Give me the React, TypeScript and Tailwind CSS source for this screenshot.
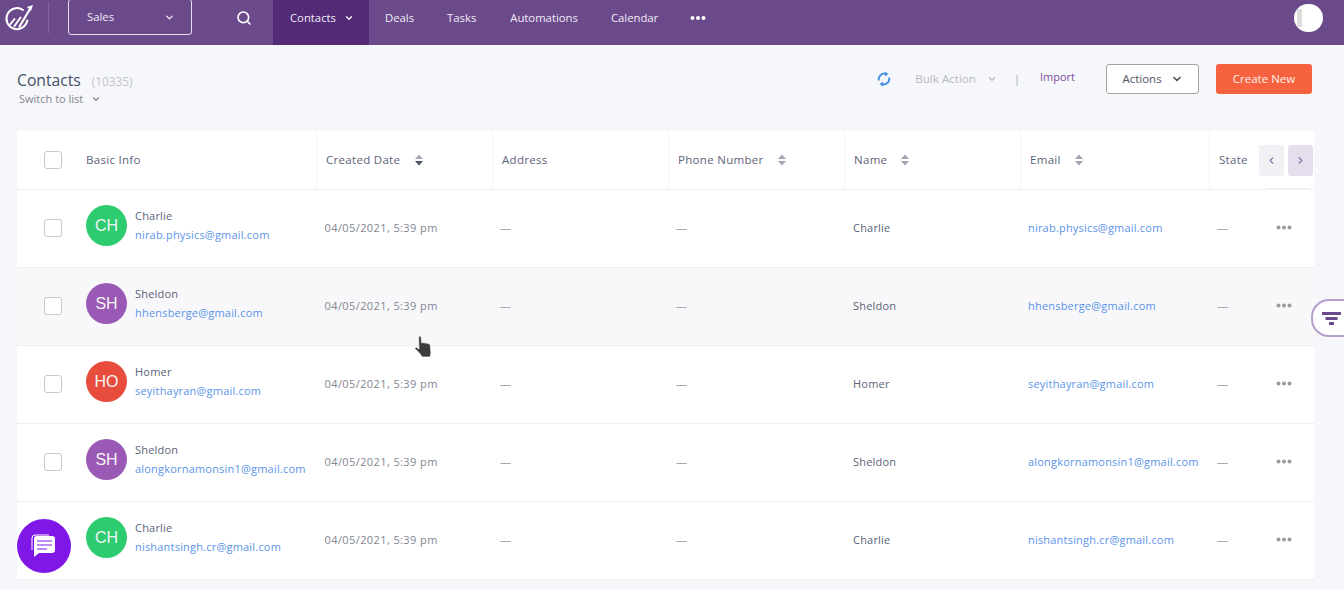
import { ChevronDown, ChevronLeft, ChevronRight, Search } from 'lucide-react'

const contacts = [
  { initials: 'CH', color: 'bg-[#2ecc71]', name: 'Charlie', email: 'nirab.physics@gmail.com', alt: false },
  { initials: 'SH', color: 'bg-[#9b59b6]', name: 'Sheldon', email: 'hhensberge@gmail.com', alt: true },
  { initials: 'HO', color: 'bg-[#e74c3c]', name: 'Homer', email: 'seyithayran@gmail.com', alt: false },
  { initials: 'SH', color: 'bg-[#9b59b6]', name: 'Sheldon', email: 'alongkornamonsin1@gmail.com', alt: false },
  { initials: 'CH', color: 'bg-[#2ecc71]', name: 'Charlie', email: 'nishantsingh.cr@gmail.com', alt: false },
]

const cols = 'grid grid-cols-[68px_231px_176px_176px_176px_176px_189px_105px]'

function Sort({ active }: { active?: boolean }) {
  return (
    <svg width="8" height="12" viewBox="0 0 8 12" className={'shrink-0 ' + (active ? 'ml-[15px]' : 'ml-3.5')}>
      <path d="M4 0.5 8 5H0z" fill="#a3a7b3" />
      <path d="M4 11.5 8 7H0z" fill={active ? '#4b5168' : '#a3a7b3'} />
    </svg>
  )
}

function Box() {
  return <div className="w-[18px] h-[18px] rounded-[3px] border border-[#c9c9c9] bg-white" />
}

function Head({ label, sort, active }: { label: string; sort?: boolean; active?: boolean }) {
  return (
    <div className="flex items-center pl-[9px] border-l border-[#f3f3f6] text-[11.5px] tracking-[0.3px] text-[#5d6378]">
      {label}
      {sort && <Sort active={active} />}
    </div>
  )
}

export default function App() {
  return (
    <div className="relative h-[589px] w-[1344px] overflow-hidden bg-[#f6f7fa] font-['Open_Sans','Noto_Sans',sans-serif]">
      <header className="flex h-[45px] items-stretch bg-[#6b4a8b] text-[11.3px] text-[#f1ecf6]">
        <div className="w-[48px]">
          <svg width="36" height="36" viewBox="0 0 36 36" fill="none" stroke="#fff" strokeLinecap="round">
            <path d="M23 10A10.5 10.5 0 1 0 27.3 20.5" strokeWidth="2" />
            <path d="M10.5 24l4-5M14.5 26l6-8.5" strokeWidth="2" />
            <path d="M19.5 26.5 30 9" strokeWidth="2.2" />
            <path d="M33 5l-6 2 4 4z" fill="#fff" stroke="none" />
          </svg>
        </div>
        <div className="my-[2px] h-[31px] w-px bg-[#83679f]" />
        <div className="ml-[19px] -mt-px flex h-[36px] w-[124px] items-center justify-between rounded-[3px] border border-[#e6deee] pl-[18px] pr-4">
          <span>Sales</span>
          <ChevronDown size={11} strokeWidth={3} />
        </div>
        <div className="ml-[44px] mr-[21px] flex items-start pt-[10px]">
          <Search size={16} strokeWidth={2.4} color="#fff" />
        </div>
        <div className="flex w-[96px] items-center gap-2 bg-[#522a76] pb-[9px] pl-[17px] text-[11.3px]">
          Contacts <ChevronDown size={10} strokeWidth={3.5} />
        </div>
        <div className="ml-4 flex items-center gap-[33px] pb-[9px]">
          <span>Deals</span>
          <span>Tasks</span>
          <span className="ml-px">Automations</span>
          <span>Calendar</span>
          <svg width="16" height="4" viewBox="0 0 16 4" fill="#fff" className="-ml-px">
            <circle cx="2.5" cy="2" r="2" />
            <circle cx="8" cy="2" r="2" />
            <circle cx="13.5" cy="2" r="2" />
          </svg>
        </div>
        <div className="ml-auto mr-[21px] mt-1 flex h-[28px] w-[29px] items-center overflow-hidden rounded-full bg-white pl-[3px]">
          <div className="h-[18px] w-[5px] bg-[#dcdcdc]" />
        </div>
      </header>

      <div className="flex h-[86px] justify-between pl-[17px] pr-[32px]">
        <div>
          <div className="mt-6 flex items-baseline">
            <span className="text-[15.7px] leading-[22px] text-[#475067]">Contacts</span>
            <span className="ml-[11px] text-[11.8px] text-[#c2c4cc]">(10335)</span>
          </div>
          <div className="ml-[2px] flex items-center gap-2 text-[11px] leading-[16px] text-[#83868f]">
            Switch to list <ChevronDown size={10} strokeWidth={3} />
          </div>
        </div>
        <div className="mt-[19px] flex h-[30px] items-center">
          <svg width="14" height="16" viewBox="0 0 14 16" fill="none" stroke="#4a90e2" strokeWidth="2" className="mr-[24px]">
            <path d="M2 9.5A5.5 5.5 0 0 1 9.5 3" />
            <path d="M12 6.5A5.5 5.5 0 0 1 4.5 13" />
            <path d="M8 0.5 11.5 3 8 5.5z" fill="#4a90e2" stroke="none" />
            <path d="M6 10.5 2.5 13 6 15.5z" fill="#4a90e2" stroke="none" />
          </svg>
          <span className="text-[11.6px] text-[#b6b8c3]">Bulk Action</span>
          <ChevronDown size={10} strokeWidth={3} color="#b6b8c3" className="ml-[11px]" />
          <span className="ml-[17px] text-[11px] text-[#a2a2a8]">|</span>
          <span className="ml-[20px] -mt-[3px] text-[11px] text-[#7b4f9d]">Import</span>
          <div className="ml-[31px] flex h-[30px] w-[93px] items-center justify-center gap-[9px] rounded-[3px] border border-[#a8a2a0] bg-white text-[11.5px] text-[#50535e]">
            Actions <ChevronDown size={12} strokeWidth={3.5} />
          </div>
          <div className="ml-[17px] flex h-[30px] w-[96px] items-center justify-center rounded-[3px] bg-[#f6623f] text-[11.5px] text-[#fdeee9]">
            Create New
          </div>
        </div>
      </div>

      <div className="ml-[17px] w-[1297px] bg-white">
        <div className={cols + ' relative h-[59px] border-b border-[#eceef0]'}>
          <div className="flex items-center pl-[27px]"><Box /></div>
          <div className="flex items-center pl-px text-[11.5px] tracking-[0.3px] text-[#5d6378]">Basic Info</div>
          <Head label="Created Date" sort active />
          <Head label="Address" />
          <Head label="Phone Number" sort />
          <Head label="Name" sort />
          <Head label="Email" sort />
          <Head label="State" />
          <div className="absolute right-px top-[14px] flex gap-1 text-[#8c6fa8]">
            <div className="flex h-[31px] w-[25px] items-center justify-center rounded-[3px] bg-[#f1f0f5]">
              <ChevronLeft size={11} strokeWidth={2.5} />
            </div>
            <div className="flex h-[31px] w-[25px] items-center justify-center rounded-[3px] bg-[#e5dfed]">
              <ChevronRight size={11} strokeWidth={2.5} />
            </div>
          </div>
          <div className="absolute -bottom-px right-[5px] h-[2px] w-[42px] bg-[#f1f1f4]" />
        </div>

        {contacts.map((c) => (
          <div key={c.email} className={cols + ' h-[78px] border-b border-[#eceef0] text-[11px] tracking-[0.2px] ' + (c.alt ? 'bg-[#f8f8fb]' : 'bg-white')}>
            <div className="flex items-center pl-[27px] pb-[2px]"><Box /></div>
            <div className="flex items-center">
              <div className={"ml-px -mt-[6px] flex h-[41px] w-[41px] shrink-0 items-center justify-center rounded-full font-['Liberation_Sans',sans-serif] text-[16px] tracking-normal text-[#f4f4f4] " + c.color}>
                {c.initials}
              </div>
              <div className="ml-2 -mt-2 leading-[19px]">
                <div className="text-[#5d6378]">{c.name}</div>
                <div className="text-[#5b94ea]">{c.email}</div>
              </div>
            </div>
            <div className="flex items-center pl-[8.5px] tracking-[0.4px] text-[#83868f]">04/05/2021, 5:39 pm</div>
            <div className="flex items-center pl-2 text-[#a8a8a8]">—</div>
            <div className="flex items-center pl-2 text-[#a8a8a8]">—</div>
            <div className="flex items-center pl-[9px] text-[#5d6378]">{c.name}</div>
            <div className="flex items-center pl-2 text-[#5b94ea]">{c.email}</div>
            <div className="flex items-center pl-2 text-[#a8a8a8]">
              —
              <svg width="16" height="5" viewBox="0 0 16 5" fill="#9a9a9e" className="ml-[48px] mb-[2px]">
                <circle cx="2.5" cy="2.5" r="2" />
                <circle cx="8" cy="2.5" r="2" />
                <circle cx="13.5" cy="2.5" r="2" />
              </svg>
            </div>
          </div>
        ))}
      </div>

      {/* floating bits */}
      <div className="absolute left-[1311px] top-[299px] flex h-[38px] w-[50px] items-center rounded-l-[18px] border-2 border-[#b59fcb] bg-white pl-[9px]">
        <svg width="19" height="13" viewBox="0 0 19 13" fill="#6b4a8b">
          <rect x="0" y="0" width="19" height="3" />
          <rect x="3.5" y="5" width="12" height="3" />
          <rect x="7" y="10" width="5" height="3" />
        </svg>
      </div>

      <div className="absolute left-[17px] top-[519px] flex h-[54px] w-[54px] items-center justify-center rounded-full bg-[#7f18e6]">
        <svg width="26" height="26" viewBox="0 0 26 26" fill="none">
          <path d="M1 17V5a3 3 0 0 1 3-3h14" stroke="#fff" strokeWidth="1" />
          <path d="M5 3h16a3 3 0 0 1 3 3v11a3 3 0 0 1-3 3H8l-5 4V6a3 3 0 0 1 2-3z" fill="#fff" />
          <path d="M6 8h15M6 12h15M6 16h10" stroke="#7f18e6" strokeWidth="1.2" />
        </svg>
      </div>

      <svg className="absolute left-[414px] top-[335px]" width="19" height="23" viewBox="0 0 19 23">
        <path d="M4.5 1.5 7 1l.8 7 2-.4 2 .5 2 .2 2.4 1.2.8 8-.8 4.5H8l-2-3.3-5.2-5.2 1.4-1.4L5 14z" fill="#3d3d3d" stroke="#fff" strokeWidth="0.7" strokeLinejoin="round" />
      </svg>
    </div>
  )
}
